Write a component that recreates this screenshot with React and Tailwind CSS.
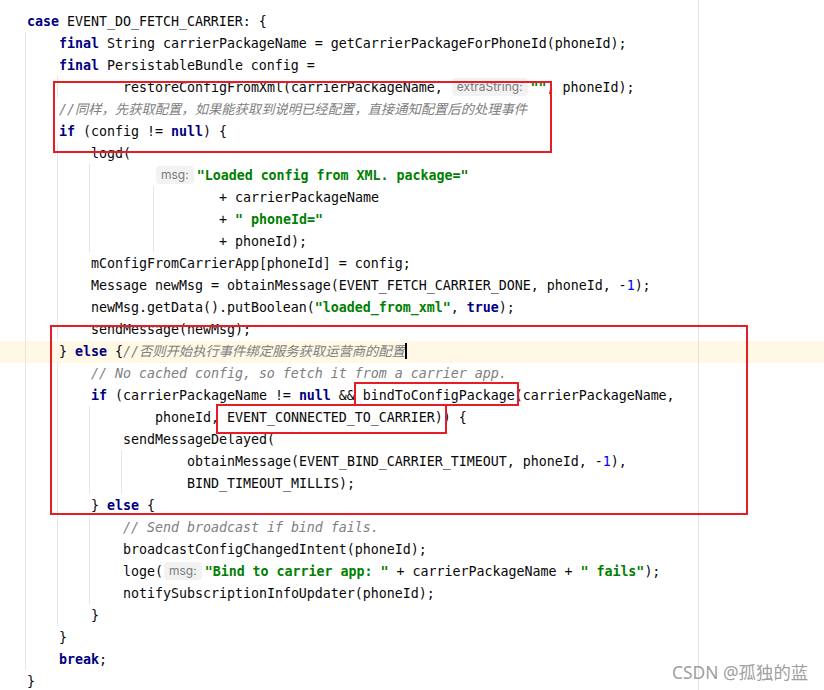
// App.jsx
const indent = {
  0: "pl-[27px]",
  4: "pl-[59px]",
  8: "pl-[91px]",
  12: "pl-[123px]",
  16: "pl-[155px]",
  20: "pl-[187px]",
  24: "pl-[219px]",
};

const tone = {
  p: "text-[#080808]",
  k: "text-[#000080] font-bold",
  s: "text-[#008000] font-bold",
  n: "text-[#0000ff]",
  c: "text-[#808080] italic",
};

// [indent, tokens, highlighted?]
const lines = [
  [0, [["k", "case"], ["p", " EVENT_DO_FETCH_CARRIER: {"]]],
  [4, [["k", "final"], ["p", " String carrierPackageName = getCarrierPackageForPhoneId(phoneId);"]]],
  [4, [["k", "final"], ["p", " PersistableBundle config ="]]],
  [12, [["p", "restoreConfigFromXml(carrierPackageName, "], ["h", "extraString:"], ["s", "\"\""], ["p", ", phoneId);"]]],
  [4, [["c", "//同样，先获取配置，如果能获取到说明已经配置，直接通知配置后的处理事件"]]],
  [4, [["k", "if"], ["p", " (config != "], ["k", "null"], ["p", ") {"]]],
  [8, [["p", "logd("]]],
  [16, [["h", "msg:"], ["s", "\"Loaded config from XML. package=\""]]],
  [24, [["p", "+ carrierPackageName"]]],
  [24, [["p", "+ "], ["s", "\" phoneId=\""]]],
  [24, [["p", "+ phoneId);"]]],
  [8, [["p", "mConfigFromCarrierApp[phoneId] = config;"]]],
  [8, [["p", "Message newMsg = obtainMessage(EVENT_FETCH_CARRIER_DONE, phoneId, -"], ["n", "1"], ["p", ");"]]],
  [8, [["p", "newMsg.getData().putBoolean("], ["s", "\"loaded_from_xml\""], ["p", ", "], ["k", "true"], ["p", ");"]]],
  [8, [["p", "sendMessage(newMsg);"]]],
  [4, [["p", "} "], ["k", "else"], ["p", " {"], ["c", "//否则开始执行事件绑定服务获取运营商的配置"], ["caret", ""]], true],
  [8, [["c", "// No cached config, so fetch it from a carrier app."]]],
  [8, [["k", "if"], ["p", " (carrierPackageName != "], ["k", "null"], ["p", " && bindToConfigPackage(carrierPackageName,"]]],
  [16, [["p", "phoneId, EVENT_CONNECTED_TO_CARRIER)) {"]]],
  [12, [["p", "sendMessageDelayed("]]],
  [20, [["p", "obtainMessage(EVENT_BIND_CARRIER_TIMEOUT, phoneId, -"], ["n", "1"], ["p", "),"]]],
  [20, [["p", "BIND_TIMEOUT_MILLIS);"]]],
  [8, [["p", "} "], ["k", "else"], ["p", " {"]]],
  [12, [["c", "// Send broadcast if bind fails."]]],
  [12, [["p", "broadcastConfigChangedIntent(phoneId);"]]],
  [12, [["p", "loge("], ["h", "msg:"], ["s", "\"Bind to carrier app: \""], ["p", " + carrierPackageName + "], ["s", "\" fails\""], ["p", ");"]]],
  [12, [["p", "notifySubscriptionInfoUpdater(phoneId);"]]],
  [8, [["p", "}"]]],
  [4, [["p", "}"]]],
  [4, [["k", "break"], ["p", ";"]]],
  [0, [["p", "}"]]],
];

// indent guides
const guides = [
  "left-[25px] top-[32px] h-[638px]",
  "left-[57px] top-[76px] h-[22px]",
  "left-[57px] top-[142px] h-[198px]",
  "left-[57px] top-[362px] h-[264px]",
  "left-[89px] top-[164px] h-[88px]",
  "left-[153px] top-[186px] h-[66px]",
  "left-[89px] top-[406px] h-[88px]",
  "left-[121px] top-[450px] h-[44px]",
  "left-[89px] top-[516px] h-[88px]",
];

// red annotation boxes
const boxes = [
  "left-[53px] top-[81px] w-[499px] h-[72px]",
  "left-[50px] top-[325px] w-[698px] h-[190px]",
  "left-[354px] top-[382px] w-[165px] h-[24px]",
  "left-[216px] top-[404px] w-[231px] h-[30px]",
];

function Token({ type, text }) {
  if (type === "h") {
    return (
      <span className="inline-block ml-[1px] mr-[3px] px-[5px] h-[18px] leading-[18px] rounded-[4px] bg-[#f2f2f2] text-[#7a7a7a] text-[12px] align-[1px] font-['Inter','Noto_Sans',sans-serif] not-italic font-normal tracking-normal">
        {text}
      </span>
    );
  }
  if (type === "caret") {
    return <span className="inline-block w-[2px] h-[16px] bg-black align-[-3px]" />;
  }
  return <span className={tone[type]}>{text}</span>;
}

export default function App() {
  return (
    <div className="relative w-[824px] h-[690px] overflow-hidden bg-white pt-[11px] font-['DejaVu_Sans_Mono','Noto_Sans_CJK_SC',monospace] text-[13.33px] tracking-[-0.03px]">
      <div className="absolute left-[698px] top-0 w-px h-full bg-[#e4e4e4]" />
      {lines.map(([col, tokens, hl], i) => (
        <div
          key={i}
          className={`h-[22px] leading-[22px] whitespace-pre ${indent[col]} ${hl ? "bg-[#fef8e5]" : ""}`}
        >
          {tokens.map(([type, text], j) => (
            <Token key={j} type={type} text={text} />
          ))}
        </div>
      ))}
      {guides.map((g, i) => (
        <div key={i} className={`absolute w-px bg-[#e6e6e6] ${g}`} />
      ))}
      {boxes.map((b, i) => (
        <div key={i} className={`absolute border-2 border-[#e81c24] ${b}`} />
      ))}
      <div className="absolute left-[672px] top-[661px] text-[17.4px] leading-[22px] text-[#a0a0a0] font-['Noto_Sans','Noto_Sans_CJK_SC',sans-serif] tracking-normal">
        CSDN @孤独的蓝
      </div>
    </div>
  );
}
